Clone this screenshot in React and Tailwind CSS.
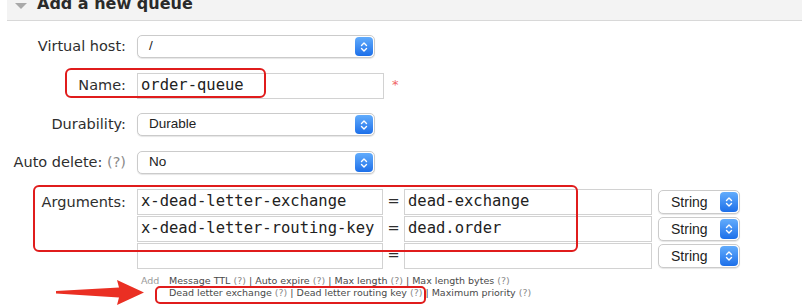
import React from 'react';

const LABEL = "font-['DejaVu_Sans',sans-serif] text-[14.5px] text-[#2e2e2e]";
const MONO = "font-['DejaVu_Sans_Mono',monospace] text-[15.5px] text-[#222]";
const UI = "font-['Liberation_Sans',Arial,sans-serif] text-[13.5px] text-[#222]";
const SMALL = "font-['DejaVu_Sans',sans-serif] text-[9.5px] leading-[12px]";

function Stepper() {
  return (
    <div className="w-[18px] my-[1px] mr-[1px] self-stretch rounded-[4px] bg-gradient-to-b from-[#62acfc] to-[#1c6fe9] flex items-center justify-center">
      <svg width="10" height="14" viewBox="0 0 10 14" fill="none">
        <path d="M2.5 5.5 L5 3 L7.5 5.5" stroke="white" strokeWidth="1.4" strokeLinecap="round" strokeLinejoin="round" />
        <path d="M2.5 8.5 L5 11 L7.5 8.5" stroke="white" strokeWidth="1.4" strokeLinecap="round" strokeLinejoin="round" />
      </svg>
    </div>
  );
}

function Select({ value, className, textClass = 'pl-[11px]', size = UI }) {
  return (
    <div
      className={`flex items-center bg-white border border-[#cbcbcb] rounded-[5px] shadow-[0_1px_1px_rgba(0,0,0,0.10)] ${className}`}
    >
      <span className={`flex-1 ${textClass} ${size}`}>{value}</span>
      <Stepper />
    </div>
  );
}

function Field({ value, className }) {
  return (
    <div className={`flex items-center bg-white border border-[#d2d2d2] pl-[3px] ${MONO} ${className}`}>
      {value}
    </div>
  );
}

function Row({ label, children, className = '' }) {
  return (
    <div className={`flex items-center ${className}`}>
      <div className={`w-[126px] text-right whitespace-nowrap ${LABEL}`}>{label}</div>
      <div className="ml-[11px] flex items-center">{children}</div>
    </div>
  );
}

function ArgRow({ k, v }) {
  return (
    <div className="flex items-center">
      <Field value={k} className="w-[246px] h-[26px]" />
      <div className={`w-[21px] text-center ${LABEL}`}>=</div>
      <Field value={v} className="w-[248px] h-[26px]" />
      <Select value="String" className="ml-[6px] w-[82px] h-[24px]" textClass="pl-[12px]" size={`${UI} text-[14px]`} />
    </div>
  );
}

const Q = () => <span className="text-[#8a8a8a]">(?)</span>;

export default function App() {
  return (
    <div className="relative w-[802px] h-[308px] overflow-hidden bg-white">
      <div className="ml-[7px] h-[21px] bg-[#f3f3f3] border-b border-[#d8d8d8] flex items-start overflow-hidden">
        <svg className="ml-[8px] mt-[3px]" width="12" height="6" viewBox="0 0 12 6">
          <path d="M0 0 L12 0 L6 6 Z" fill="#a9a9a9" />
        </svg>
        <span className="ml-[10px] -mt-[4px] font-['DejaVu_Sans',sans-serif] font-bold text-[16px] leading-[16px] text-[#2a2a2a]">
          Add a new queue
        </span>
      </div>

      <Row label="Virtual host:" className="mt-[14px]">
        <Select value="/" className="w-[238px] h-[23px]" />
      </Row>

      <Row label="Name:" className="mt-[15px]">
        <Field value="order-queue" className="w-[247px] h-[26px]" />
        <span className="ml-[8px] -mt-[2px] text-[#f06565] font-['DejaVu_Sans',sans-serif] text-[13px]">*</span>
      </Row>

      <Row label="Durability:" className="mt-[14px]">
        <Select value="Durable" className="w-[238px] h-[23px]" />
      </Row>

      <Row
        label={
          <>
            Auto delete: <Q />
          </>
        }
        className="mt-[15px]"
      >
        <Select value="No" className="w-[238px] h-[23px]" />
      </Row>

      <div className="mt-[15px] flex items-start">
        <div className={`w-[126px] h-[26px] leading-[26px] text-right ${LABEL}`}>Arguments:</div>
        <div className="ml-[11px] flex flex-col gap-[1px]">
          <ArgRow k="x-dead-letter-exchange" v="dead-exchange" />
          <ArgRow k="x-dead-letter-routing-key" v="dead.order" />
          <ArgRow k="" v="" />
        </div>
      </div>

      <div className={`mt-[6px] ml-[141px] flex ${SMALL}`}>
        <span className="w-[28px] text-[#9a9a9a]">Add</span>
        <div className="text-[#4a4a4a] whitespace-nowrap">
          <div>
            Message TTL <Q /> | Auto expire <Q /> | Max length <Q /> | Max length bytes <Q />
          </div>
          <div>
            Dead letter exchange <Q /> | Dead letter routing key <Q /> | Maximum priority <Q />
          </div>
        </div>
      </div>

      {/* annotations */}
      <div className="absolute left-[65px] top-[68px] w-[201px] h-[30px] border-2 border-[#e01c1c] rounded-[6px]" />
      <div className="absolute left-[33px] top-[185px] w-[545px] h-[67px] border-2 border-[#e01c1c] rounded-[6px]" />
      <div className="absolute left-[155px] top-[286px] w-[271px] h-[18px] border-2 border-[#e01c1c] rounded-[5px]" />
      <svg className="absolute left-0 top-0" width="802" height="308" viewBox="0 0 802 308">
        <path d="M56 291 L119 287.5 L117 280 L144 292.5 L117 305 L119 297.5 L56 293.5 Z" fill="#ea2f23" />
      </svg>
    </div>
  );
}
